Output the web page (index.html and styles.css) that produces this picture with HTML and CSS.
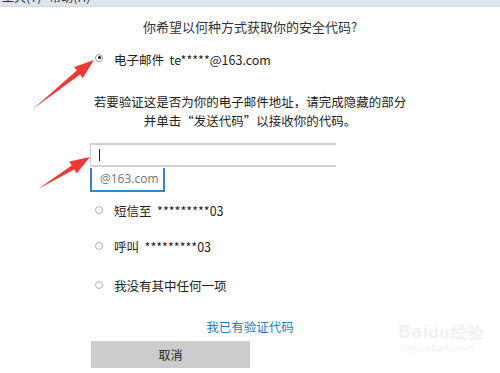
FILE: index.html
```html
<!DOCTYPE html>
<html lang="zh">
<head>
<meta charset="utf-8">
<link rel="stylesheet" href="styles.css">
</head>
<body>
<div class="menubar"><span class="menu-text">工具(T)&nbsp;&nbsp;&nbsp;帮助(H)</span></div>
<main class="dialog">
  <h1 class="title">你希望以何种方式获取你的安全代码?</h1>
  <div class="option opt-email"><span class="radio checked"></span><span class="label">电子邮件&nbsp;&nbsp;te*****@163.com</span></div>
  <p class="hint">若要验证这是否为你的电子邮件地址，请完成隐藏的部分<br>并单击“发送代码”以接收你的代码。</p>
  <div class="field"><span class="caret"></span></div>
  <div class="domain">@163.com</div>
  <div class="option opt-sms"><span class="radio"></span><span class="label">短信至&nbsp;&nbsp;*********03</span></div>
  <div class="option opt-call"><span class="radio"></span><span class="label">呼叫&nbsp;&nbsp;*********03</span></div>
  <div class="option opt-none"><span class="radio"></span><span class="label">我没有其中任何一项</span></div>
  <a class="link">我已有验证代码</a>
  <div class="button">取消</div>
</main>
<svg class="arrows" width="500" height="373" viewBox="0 0 500 373">
  <polygon points="33,109 80,74.5 82.8,78 94,60 74,67 76.8,70.5" fill="#ec3a36"/>
  <polygon points="38,189 74.3,169.6 76.7,173.5 90,157 69.3,161.5 71.7,165.4" fill="#ec3a36"/>
</svg>
<div class="watermark"><div class="wm-logo">Bai<span class="wm-du">du</span>经验</div><div class="wm-url">jingyan.baidu.com</div></div>
</body>
</html>
```
FILE: styles.css
```css
html, body {
  margin: 0;
  padding: 0;
  background: #ffffff;
}
body {
  width: 500px;
  height: 373px;
  overflow: hidden;
  position: relative;
  font-family: "Noto Sans CJK SC", "Noto Sans", sans-serif;
  color: #222;
}
.menubar {
  height: 6px;
  background: #dfe4ec;
  border-bottom: 1px solid #d3d9e3;
  overflow: hidden;
}
.menu-text {
  display: block;
  margin-top: -10px;
  padding-left: 2px;
  font-size: 12px;
  line-height: 14px;
  color: #333;
}
.dialog {
  width: 320px;
  margin-left: 90px;
  display: flex;
  flex-direction: column;
}
.title {
  margin: 10px 0 0 0;
  font-size: 13px;
  font-weight: normal;
  line-height: 20px;
  text-align: center;
  color: #333;
}
.option {
  display: flex;
  align-items: center;
  height: 20px;
  font-size: 12.5px;
  color: #222;
}
.radio {
  width: 8px;
  height: 8px;
  border: 1px solid #b4b4b4;
  border-radius: 50%;
  margin-left: 5px;
  margin-right: 11px;
  box-sizing: border-box;
  position: relative;
  background: #fafafa;
}
.radio.checked {
  border-color: #9a9a9a;
  background: #fff;
}
.radio.checked::after {
  content: "";
  position: absolute;
  left: 1.5px;
  top: 1.5px;
  width: 3px;
  height: 3px;
  border-radius: 50%;
  background: #111;
}
.opt-email { margin-top: 12px; }
.opt-email .radio { margin-top: -3px; }
.hint {
  margin: 23px 0 0 0;
  font-size: 12.5px;
  line-height: 19px;
  text-align: center;
  color: #222;
}
.field {
  margin-top: 13px;
  width: 246px;
  height: 24px;
  box-sizing: border-box;
  border-top: 2px solid #cfcfcf;
  border-bottom: 2px solid #d4d4d4;
  border-left: 1px solid #cfcfcf;
  display: flex;
  align-items: center;
}
.caret {
  width: 1px;
  height: 12px;
  background: #222;
  margin-left: 8px;
}
.domain {
  margin-top: 1px;
  width: 75px;
  height: 24px;
  box-sizing: border-box;
  border: 2px solid #3b84c4;
  border-top: none;
  font-family: "Open Sans", "Noto Sans", sans-serif;
  font-size: 12px;
  line-height: 22px;
  color: #777;
  padding-left: 8px;
}
.opt-sms { margin-top: 8px; }
.opt-call { margin-top: 16px; }
.opt-none { margin-top: 19px; }
.link {
  margin-top: 22px;
  font-size: 12.5px;
  line-height: 20px;
  text-align: center;
  color: #2d79bf;
}
.button {
  margin-top: 4px;
  width: 159px;
  height: 27px;
  margin-left: 1px;
  background: #cccccc;
  font-size: 12px;
  line-height: 27px;
  text-align: center;
  color: #222;
}
.arrows {
  position: absolute;
  left: 0;
  top: 0;
  pointer-events: none;
}
.watermark {
  position: absolute;
  left: 398px;
  top: 322px;
  color: #f2f2f2;
  font-family: "DejaVu Sans", sans-serif;
  text-align: left;
}
.wm-logo {
  font-size: 17px;
  font-weight: bold;
  line-height: 20px;
}
.wm-du {
  font-size: 15px;
}
.wm-url {
  font-size: 8px;
  line-height: 12px;
  padding-left: 2px;
}
```
